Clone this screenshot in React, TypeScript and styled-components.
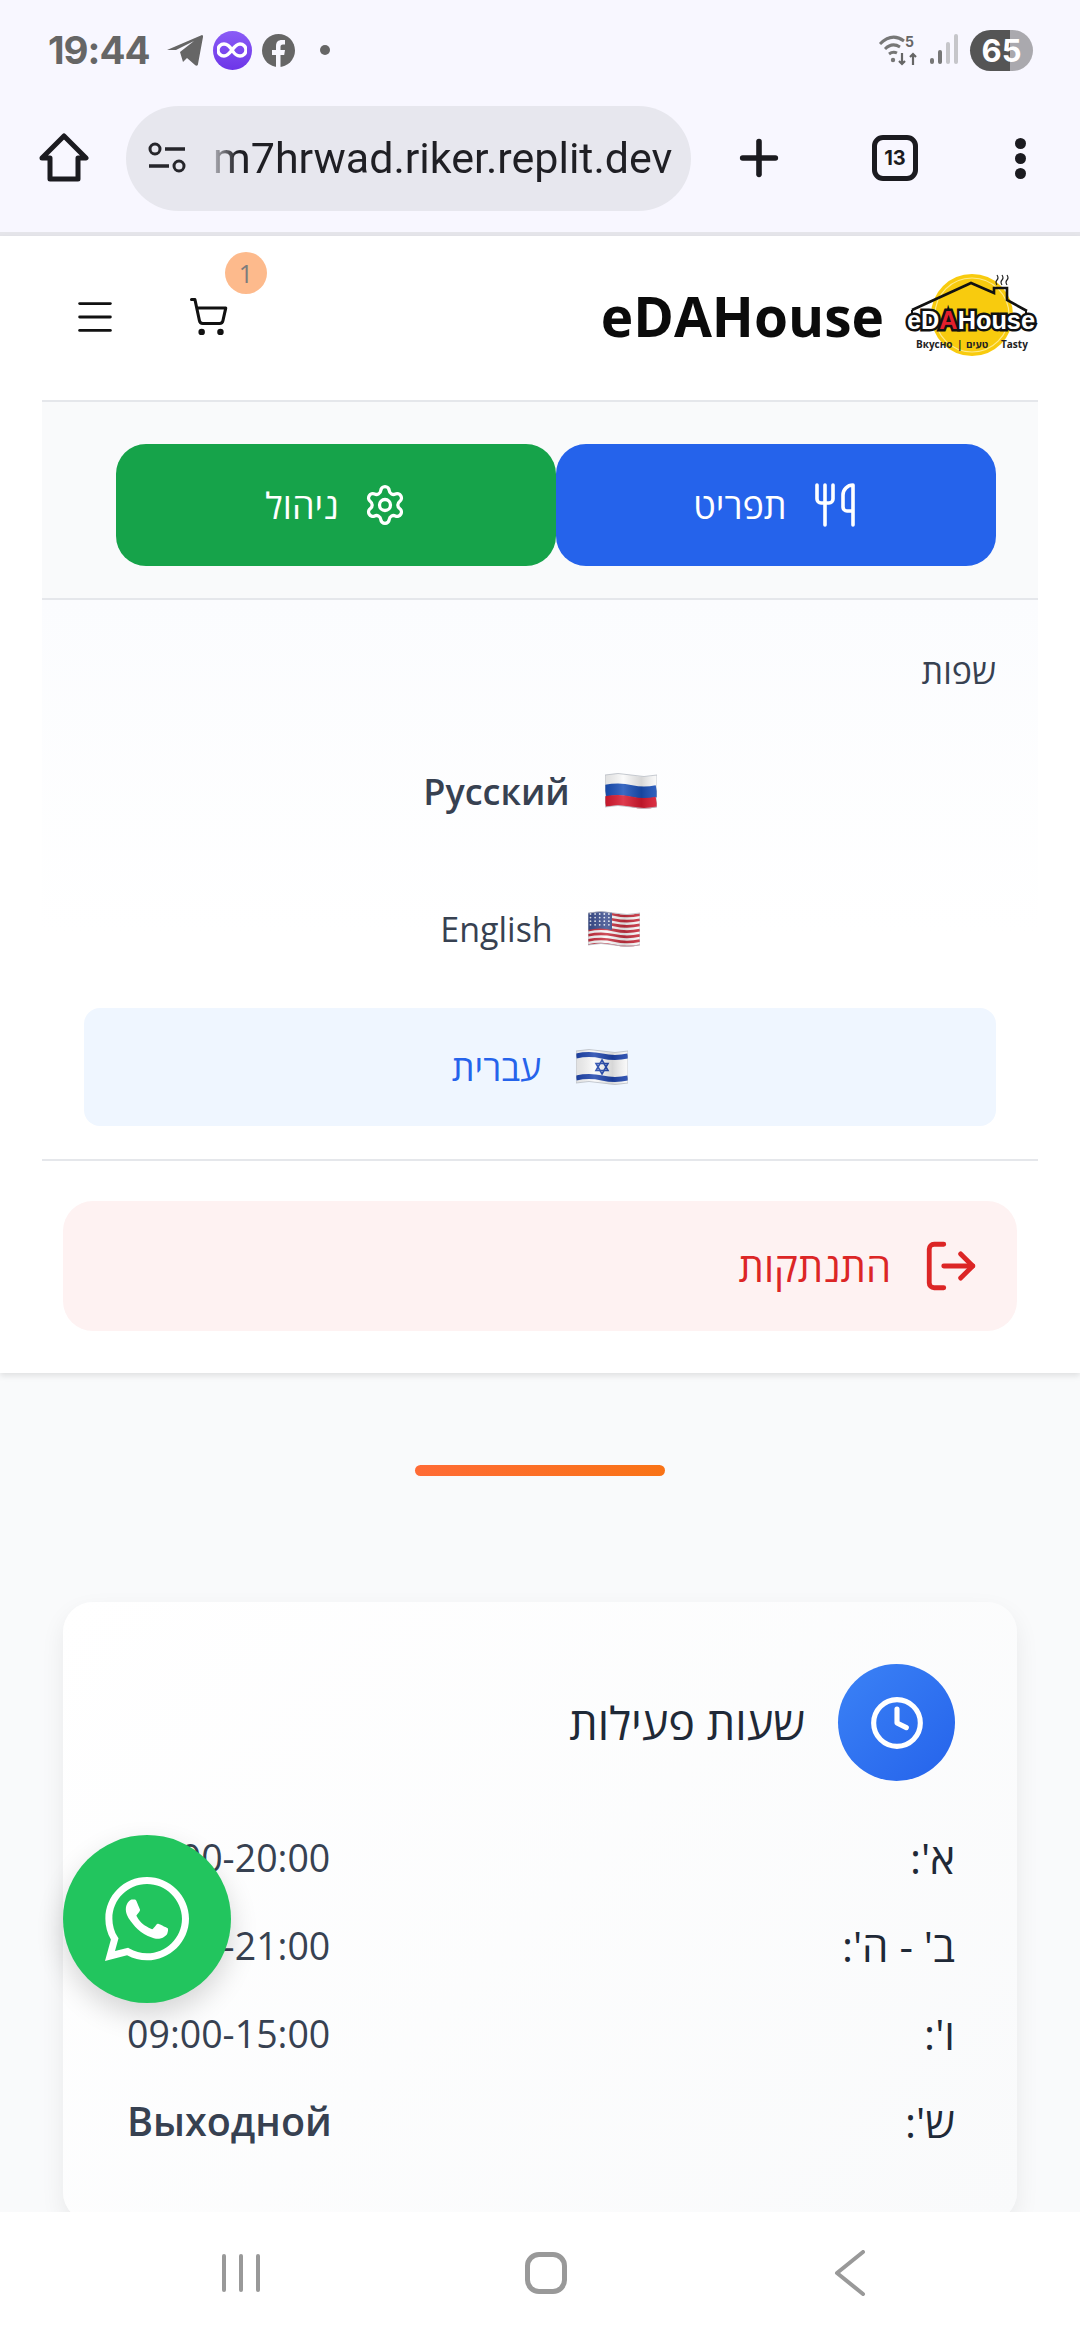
import { Clock, LogOut, Menu, Plus, Settings, ShoppingCart, Utensils } from "lucide-react";
import { FaWhatsapp } from "react-icons/fa";
import styled, { createGlobalStyle } from "styled-components";

const GlobalStyle = createGlobalStyle`
  html, body {
    margin: 0;
    padding: 0;
    background: #f9fafb;
  }
  * {
    box-sizing: border-box;
  }
`;

const hours = [
  { day: "א':", time: "09:00-20:00" },
  { day: "ב' - ה':", time: "09:00-21:00" },
  { day: "ו':", time: "09:00-15:00" },
  { day: "ש':", time: "Выходной", closed: true },
];

const wave = (y: number) => `M0 ${y}Q13 ${y - 3} 26 ${y}T52 ${y}`;

const FlagShape = ({ id, children }: { id: string; children: React.ReactNode }) => (
  <svg width="52" height="38" viewBox="0 0 52 38">
    <defs>
      <clipPath id={id}>
        <path d="M0 3Q13 0 26 3T52 3V35Q39 38 26 35T0 35Z" />
      </clipPath>
      <linearGradient id={`${id}-shine`} x1="0" x2="1" y1="0" y2="0">
        <stop offset="0" stopColor="#000" stopOpacity="0.1" />
        <stop offset="0.35" stopColor="#fff" stopOpacity="0.15" />
        <stop offset="0.7" stopColor="#000" stopOpacity="0.14" />
        <stop offset="1" stopColor="#fff" stopOpacity="0.1" />
      </linearGradient>
    </defs>
    <g clipPath={`url(#${id})`}>
      <rect width="52" height="38" fill="#fafafa" />
      {children}
      <rect width="52" height="38" fill={`url(#${id}-shine)`} />
    </g>
    <path d="M0 3Q13 0 26 3T52 3V35Q39 38 26 35T0 35Z" fill="none" stroke="#b8bcc4" strokeWidth="0.8" />
  </svg>
);

const RussiaFlag = () => (
  <FlagShape id="ru">
    <path d={wave(19)} stroke="#1a50b8" strokeWidth="12" fill="none" />
    <path d={wave(31)} stroke="#d9192f" strokeWidth="13" fill="none" />
  </FlagShape>
);

const UsaFlag = () => (
  <FlagShape id="us">
    {[0, 1, 2, 3, 4, 5, 6].map((i) => (
      <path key={i} d={wave(4.5 + i * 5.2)} stroke="#c8303f" strokeWidth="2.7" fill="none" />
    ))}
    <path d="M0 0H24V20Q12 17 0 20Z" fill="#3c4f8f" />
    {[0, 1, 2, 3, 4, 5, 6, 7, 8, 9, 10, 11, 12, 13, 14, 15, 16, 17, 18, 19].map((i) => (
      <circle key={i} cx={2.5 + (i % 5) * 4.6} cy={4 + Math.floor(i / 5) * 3.6} r="0.9" fill="#e8ecf6" />
    ))}
  </FlagShape>
);

const IsraelFlag = () => (
  <FlagShape id="il">
    <path d={wave(8)} stroke="#1f45ad" strokeWidth="5" fill="none" />
    <path d={wave(30)} stroke="#1f45ad" strokeWidth="5" fill="none" />
    <path d="M26 12L32 22.5H20Z" fill="none" stroke="#1f45ad" strokeWidth="1.6" />
    <path d="M26 26L32 15.5H20Z" fill="none" stroke="#1f45ad" strokeWidth="1.6" />
  </FlagShape>
);

const Logo = () => (
  <LogoSvg width="134" height="88" viewBox="0 0 134 88">
    <circle cx="68" cy="43" r="41" fill="#f8cb0e" />
    <circle cx="68" cy="43" r="37" fill="none" stroke="#fde98a" strokeWidth="1.2" />
    <path d="M8 38L67 11L90 21V16H103V28L123 39" fill="none" stroke="#111" strokeWidth="2.6" />
    <path d="M8 38V42M122 38V42" stroke="#111" strokeWidth="2" />
    <path
      d="M93 13q-2-3 0-5t0-5M98 13q-2-3 0-5t0-5M103 13q-2-3 0-5t0-5"
      fill="none"
      stroke="#222"
      strokeWidth="1.2"
    />
    <LogoWord x="3" y="57" textLength="128" lengthAdjust="spacingAndGlyphs">
      eD<tspan fill="#e3202c">A</tspan>House
    </LogoWord>
    <LogoTagline x="12" y="76">
      Вкусно
    </LogoTagline>
    <LogoTagline x="53" y="76">
      |
    </LogoTagline>
    <LogoTagline x="62" y="76">
      טעים
    </LogoTagline>
    <LogoTagline x="97" y="76">
      Tasty
    </LogoTagline>
  </LogoSvg>
);

export default function App() {
  return (
    <Screen>
      <GlobalStyle />
      <BrowserChrome>
        <StatusBar>
          <StatusGroup>
            <Time>19:44</Time>
            <svg width="36" height="32" viewBox="0 0 36 32">
              <path d="M0 16L35 1c1 0 1 1 1 2L31 30c0 2-2 2-3 1l-8-7-4 4-3-10 14-11-18 9Z" fill="#666" />
            </svg>
            <InfinityBadge>
              <svg width="30" height="16" viewBox="0 0 30 16">
                <path
                  d="M15 8C12 3 9 2 7 2a6 6 0 0 0 0 12c3 0 5-2 8-6s5-6 8-6a6 6 0 0 1 0 12c-2 0-5-1-8-6Z"
                  fill="none"
                  stroke="#fff"
                  strokeWidth="3.4"
                />
              </svg>
            </InfinityBadge>
            <svg width="33" height="33" viewBox="0 0 33 33">
              <circle cx="16.5" cy="16.5" r="16.5" fill="#666" />
              <path
                d="M14 33V21h-4v-5h4v-4c0-4 2-6 6-6h3v4.500h-2c-2 0-2.500 1-2.500 2.500v3h4.500l-.8 5H18.500v12Z"
                fill="#f8f7ff"
              />
            </svg>
            <StatusDot />
          </StatusGroup>
          <StatusGroup>
            <svg width="42" height="34" viewBox="0 0 42 34">
              <path d="M2 11Q14-1 26 8M7 16q7-7 15-2M11 21q4-3 8-1" fill="none" stroke="#777" strokeWidth="3" />
              <circle cx="15" cy="27" r="2.200" fill="#777" />
              <path d="M24 20v11m-3-3 3 3 3-3M35 32V21m-3 3 3-3 3 3" fill="none" stroke="#666" strokeWidth="2.200" />
              <SignalDigit x="27" y="14">
                5
              </SignalDigit>
            </svg>
            <svg width="30" height="32" viewBox="0 0 30 32">
              <rect x="0" y="24" width="4" height="6" rx="2" fill="#777" />
              <rect x="8" y="16" width="4" height="14" rx="2" fill="#777" />
              <rect x="16" y="8" width="4" height="22" rx="2" fill="#c6c6ca" />
              <rect x="24" y="0" width="4" height="30" rx="2" fill="#c6c6ca" />
            </svg>
            <Battery>65</Battery>
          </StatusGroup>
        </StatusBar>
        <Toolbar>
          <svg width="50" height="50" viewBox="0 0 50 50">
            <path
              d="M25 3L47 25H39V46H11V25H3Z"
              fill="none"
              stroke="#1b1b20"
              strokeWidth="5"
              strokeLinejoin="round"
            />
          </svg>
          <AddressPill>
            <svg width="40" height="32" viewBox="0 0 40 32">
              <circle cx="8" cy="7" r="5" fill="none" stroke="#26262b" strokeWidth="3" />
              <path d="M18 7h20M2 24h20" stroke="#26262b" strokeWidth="3.400" />
              <circle cx="32" cy="24" r="5" fill="none" stroke="#26262b" strokeWidth="3" />
            </svg>
            <UrlText>m7hrwad.riker.replit.dev</UrlText>
          </AddressPill>
          <ToolbarPlus>
            <Plus size={56} strokeWidth={2.400} color="#1b1b20" />
          </ToolbarPlus>
          <TabCount>13</TabCount>
          <MoreDots>
            <i />
            <i />
            <i />
          </MoreDots>
        </Toolbar>
      </BrowserChrome>

      <SiteMenu dir="rtl">
        <SiteHeader>
          <Brand>
            <Logo />
            <BrandName>eDAHouse</BrandName>
          </Brand>
          <HeaderActions>
            <CartButton>
              <ShoppingCart size={41} strokeWidth={1.800} color="#111" />
              <CartBadge>1</CartBadge>
            </CartButton>
            <Menu size={46} strokeWidth={1.500} color="#111" />
          </HeaderActions>
        </SiteHeader>

        <QuickLinks>
          <QuickLink $color="#2563eb">
            <Utensils size={48} strokeWidth={1.800} />
            תפריט
          </QuickLink>
          <QuickLink $color="#16a34a">
            <Settings size={44} strokeWidth={1.800} />
            ניהול
          </QuickLink>
        </QuickLinks>

        <LanguageSection>
          <SectionLabel>שפות</SectionLabel>
          <LanguageList>
            <LanguageRow $weight={600}>
              <RussiaFlag />
              Русский
            </LanguageRow>
            <LanguageRow $size={34}>
              <UsaFlag />
              English
            </LanguageRow>
            <LanguageRow $active>
              <IsraelFlag />
              עברית
            </LanguageRow>
          </LanguageList>
        </LanguageSection>

        <LogoutWrap>
          <LogoutButton>
            <LogOut size={58} strokeWidth={2} />
            התנתקות
          </LogoutButton>
        </LogoutWrap>
      </SiteMenu>

      <AccentBar />

      <HoursCard dir="rtl">
        <HoursTitleRow>
          <ClockCircle>
            <Clock size={56} strokeWidth={2.200} color="#fff" />
          </ClockCircle>
          <HoursTitle>שעות פעילות</HoursTitle>
        </HoursTitleRow>
        <HoursList>
          {hours.map((row) => (
            <HoursRow key={row.day}>
              <DayLabel>{row.day}</DayLabel>
              <TimeValue dir="ltr" $closed={row.closed}>
                {row.time}
              </TimeValue>
            </HoursRow>
          ))}
        </HoursList>
      </HoursCard>

      <WhatsappButton>
        <FaWhatsapp size={96} color="#fff" />
      </WhatsappButton>

      <SystemNav>
        <RecentBars>
          <i />
          <i />
          <i />
        </RecentBars>
        <HomeSquare />
        <svg width="32" height="46" viewBox="0 0 32 46">
          <path d="M29 2L3 23l26 21" fill="none" stroke="#999" strokeWidth="4" strokeLinecap="round" strokeLinejoin="round" />
        </svg>
      </SystemNav>
    </Screen>
  );
}

const Screen = styled.div`
  position: relative;
  display: flex;
  flex-direction: column;
  width: 1080px;
  height: 2340px;
  overflow: hidden;
  background: #f9fafb;
  font-family: "Open Sans", "Noto Sans", "Liberation Sans", sans-serif;
`;

const BrowserChrome = styled.header`
  flex: none;
  height: 236px;
  background: #f8f7ff;
  border-bottom: 4px solid #e5e5ea;
`;

const StatusBar = styled.div`
  display: flex;
  align-items: center;
  justify-content: space-between;
  height: 100px;
  padding: 0 47px 0 48px;
`;

const StatusGroup = styled.div`
  display: flex;
  align-items: center;
  gap: 10px;
`;

const Time = styled.span`
  margin-right: 7px;
  color: #666;
  font-family: Inter, Roboto, sans-serif;
  font-size: 38.5px;
  font-weight: 700;
  letter-spacing: -1px;
`;

const InfinityBadge = styled.span`
  display: flex;
  align-items: center;
  justify-content: center;
  width: 39px;
  height: 39px;
  border-radius: 50%;
  background: linear-gradient(#8a5cf6, #6d35e8);
`;

const StatusDot = styled.span`
  width: 10px;
  height: 10px;
  margin-left: 15px;
  border-radius: 50%;
  background: #666;
`;

const SignalDigit = styled.text`
  fill: #666;
  font-family: Inter, sans-serif;
  font-size: 14px;
  font-weight: 700;
`;

const Battery = styled.span`
  width: 63px;
  height: 41px;
  border-radius: 21px;
  background: linear-gradient(90deg, #555 0 63%, #aaa9ae 63% 100%);
  color: #fff;
  font-family: Inter, Roboto, sans-serif;
  font-size: 31px;
  font-weight: 700;
  line-height: 41px;
  text-align: center;
`;

const Toolbar = styled.div`
  display: flex;
  align-items: center;
  height: 116px;
  padding: 0 0 0 39px;
`;

const AddressPill = styled.div`
  display: flex;
  align-items: center;
  gap: 26px;
  width: 565px;
  height: 105px;
  margin-left: 37px;
  padding-left: 21px;
  border-radius: 53px;
  background: #e7e7ee;
`;

const UrlText = styled.span`
  color: #1f1f24;
  font-family: Roboto, Inter, sans-serif;
  font-size: 43px;
  white-space: nowrap;
  -webkit-mask-image: linear-gradient(90deg, rgba(0, 0, 0, 0.25), #000 24px);
  mask-image: linear-gradient(90deg, rgba(0, 0, 0, 0.25), #000 24px);
`;

const ToolbarPlus = styled.span`
  display: flex;
  margin-left: 40px;
`;

const TabCount = styled.span`
  width: 46px;
  height: 46px;
  margin-left: 85px;
  border: 5px solid #1b1b20;
  border-radius: 11px;
  color: #1b1b20;
  font-family: Inter, Roboto, sans-serif;
  font-size: 20px;
  font-weight: 700;
  line-height: 36px;
  text-align: center;
`;

const MoreDots = styled.span`
  display: flex;
  flex-direction: column;
  gap: 4px;
  margin-left: 97px;

  i {
    width: 11px;
    height: 11px;
    border-radius: 50%;
    background: #1b1b20;
  }
`;

const SiteMenu = styled.nav`
  flex: none;
  height: 1137px;
  padding: 0 63px 42px;
  background: #fff;
  box-shadow: 0 3px 6px rgba(0, 0, 0, 0.1);
`;

const SiteHeader = styled.div`
  display: flex;
  align-items: center;
  justify-content: space-between;
  height: 164px;
  margin: 0 -21px;
  padding-left: 30px;
`;

const Brand = styled.div`
  display: flex;
  align-items: center;
  gap: 20px;
`;

const LogoSvg = styled.svg`
  flex: none;
  margin-top: -4px;
  direction: ltr;
`;

const LogoWord = styled.text`
  fill: #fff;
  stroke: #111;
  stroke-width: 5px;
  paint-order: stroke;
  font-family: "Liberation Sans", sans-serif;
  font-size: 25px;
  font-weight: 700;
`;

const LogoTagline = styled.text`
  fill: #222;
  font-family: "Open Sans", "Liberation Sans", sans-serif;
  font-size: 10px;
  font-weight: 700;
`;

const BrandName = styled.span`
  margin-top: -6px;
  color: #0b0b0b;
  font-family: "Open Sans", "Noto Sans", sans-serif;
  font-size: 55px;
  font-weight: 700;
  line-height: 1;
`;

const HeaderActions = styled.div`
  display: flex;
  align-items: center;
  gap: 70px;
  margin-top: -3px;
`;

const CartButton = styled.span`
  position: relative;
  display: flex;
`;

const CartBadge = styled.span`
  position: absolute;
  top: -44px;
  right: -38px;
  width: 42px;
  height: 42px;
  border-radius: 50%;
  background: #fdba8c;
  color: #7c7c7c;
  font-size: 25px;
  line-height: 42px;
  text-align: center;
`;

const QuickLinks = styled.div`
  display: flex;
  justify-content: center;
  height: 200px;
  margin: 0 -21px;
  padding: 42px 0 30px 32px;
  border-top: 2px solid #e5e7eb;
  border-bottom: 2px solid #e5e7eb;
  background: #f9fafb;
`;

const QuickLink = styled.a<{ $color: string }>`
  display: flex;
  align-items: center;
  justify-content: center;
  gap: 24px;
  width: 440px;
  height: 122px;
  border-radius: 30px;
  background: ${({ $color }) => $color};
  color: #fff;
  font-size: 36px;
  font-weight: 500;
`;

const LanguageSection = styled.section`
  height: 561px;
  margin: 0 -21px;
  padding: 42px 42px 0;
  border-bottom: 2px solid #e5e7eb;
  background: linear-gradient(#fbfcfe, #fff 60%);
`;

const SectionLabel = styled.div`
  color: #374151;
  font-size: 34px;
  line-height: 58px;
`;

const LanguageList = styled.div`
  display: flex;
  flex-direction: column;
  gap: 20px;
  margin-top: 32px;
`;

const LanguageRow = styled.a<{ $active?: boolean; $weight?: number; $size?: number }>`
  display: flex;
  align-items: center;
  justify-content: center;
  gap: 35px;
  height: 118px;
  border-radius: 16px;
  background: ${({ $active }) => ($active ? "#eff6ff" : "transparent")};
  color: ${({ $active }) => ($active ? "#2563eb" : "#374151")};
  font-size: ${({ $size }) => $size ?? 36}px;
  font-weight: ${({ $weight }) => $weight ?? 400};
`;

const LogoutWrap = styled.div`
  margin-top: 40px;
`;

const LogoutButton = styled.a`
  display: flex;
  align-items: center;
  gap: 31px;
  height: 130px;
  padding-right: 37px;
  border-radius: 30px;
  background: #fef2f2;
  color: #dc2626;
  font-size: 40px;
`;

const AccentBar = styled.div`
  flex: none;
  align-self: center;
  width: 250px;
  height: 11px;
  margin-top: 92px;
  border-radius: 6px;
  background: linear-gradient(90deg, #ff6b35, #f97316);
`;

const HoursCard = styled.section`
  flex: none;
  height: 620px;
  margin: 126px 63px 0;
  padding: 62px 62px 0 64px;
  border-radius: 30px;
  background: linear-gradient(135deg, #fff, #f9fafb);
  box-shadow: 0 10px 25px rgba(0, 0, 0, 0.07);
`;

const HoursTitleRow = styled.div`
  display: flex;
  align-items: center;
  gap: 33px;
`;

const ClockCircle = styled.span`
  display: flex;
  align-items: center;
  justify-content: center;
  width: 117px;
  height: 117px;
  border-radius: 50%;
  background: linear-gradient(135deg, #3b82f6, #2563eb);
`;

const HoursTitle = styled.h2`
  margin: 0;
  color: #1f2937;
  font-size: 45px;
  font-weight: 500;
`;

const HoursList = styled.div`
  display: flex;
  flex-direction: column;
  gap: 36px;
  margin-top: 50px;
`;

const HoursRow = styled.div`
  display: flex;
  align-items: center;
  justify-content: space-between;
  height: 52px;
`;

const DayLabel = styled.span`
  color: #1f2937;
  font-size: 42px;
  font-weight: 500;
`;

const TimeValue = styled.span<{ $closed?: boolean }>`
  color: #374151;
  font-size: ${({ $closed }) => ($closed ? 39.5 : 37.5)}px;
  font-weight: ${({ $closed }) => ($closed ? 600 : 400)};
`;

const WhatsappButton = styled.a`
  position: absolute;
  top: 1835px;
  left: 63px;
  display: flex;
  align-items: center;
  justify-content: center;
  width: 168px;
  height: 168px;
  border-radius: 50%;
  background: #22c55e;
  box-shadow: 0 12px 28px rgba(0, 0, 0, 0.16);
`;

const SystemNav = styled.footer`
  position: absolute;
  right: 0;
  bottom: 0;
  left: 0;
  display: flex;
  align-items: center;
  height: 128px;
  padding: 0 0 6px 222px;
  background: #fff;

  svg {
    margin-left: 267px;
  }
`;

const RecentBars = styled.span`
  display: flex;
  gap: 13px;

  i {
    width: 4px;
    height: 38px;
    border-radius: 2px;
    background: #999;
  }
`;

const HomeSquare = styled.span`
  width: 42px;
  height: 42px;
  margin-left: 265px;
  border: 5px solid #999;
  border-radius: 14px;
`;
